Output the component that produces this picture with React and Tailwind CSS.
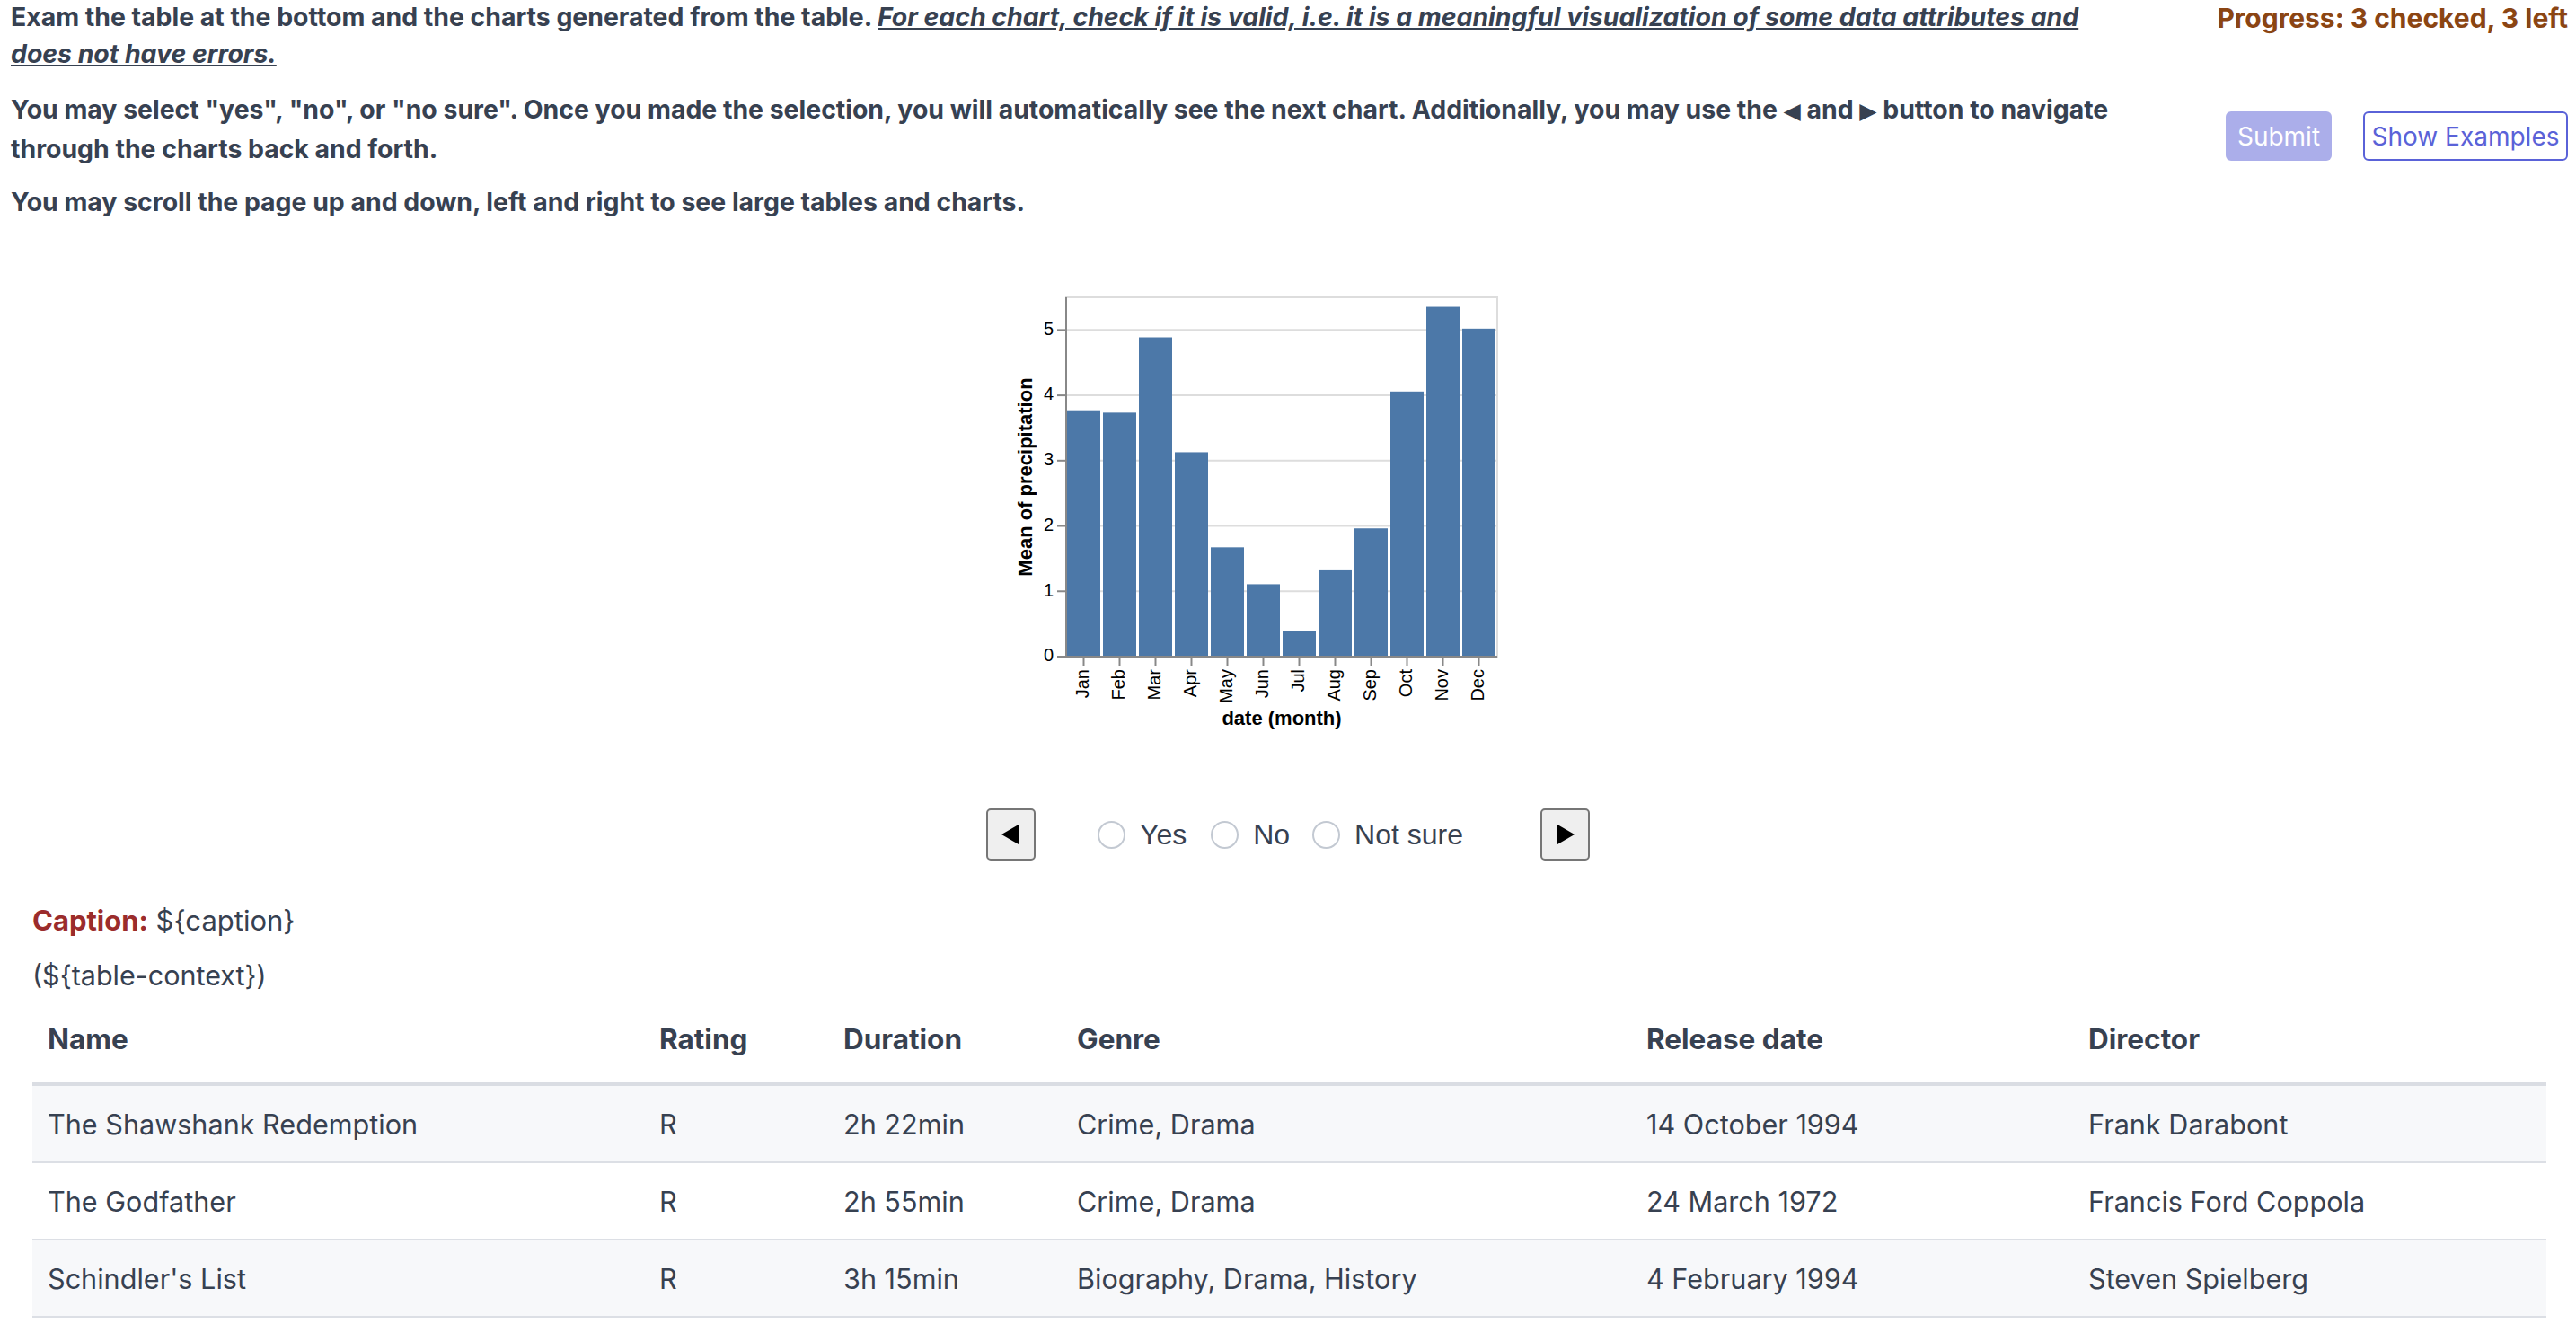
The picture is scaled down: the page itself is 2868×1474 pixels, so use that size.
import React from "react";

const data = [
  ["Jan", 3.758],
  ["Feb", 3.735],
  ["Mar", 4.888],
  ["Apr", 3.129],
  ["May", 1.673],
  ["Jun", 1.108],
  ["Jul", 0.388],
  ["Aug", 1.321],
  ["Sep", 1.963],
  ["Oct", 4.059],
  ["Nov", 5.355],
  ["Dec", 5.021],
];

function Chart() {
  const x0 = 67;
  const y0 = 31;
  const W = 480;
  const H = 400;
  const k = H / 5.5;
  const zero = y0 + H;
  return (
    <svg width="628" height="520" viewBox="0 0 628 520">
      <g fontFamily="'Liberation Sans', Arial, Helvetica, sans-serif">
        <rect x={x0} y={y0} width={W} height={H} fill="none" stroke="#dddddd" strokeWidth="2" />
        {[0, 1, 2, 3, 4, 5].map((v) => (
          <line key={v} x1={x0} x2={x0 + W} y1={zero - v * k} y2={zero - v * k} stroke="#dddddd" strokeWidth="2" />
        ))}
        {data.map(([m, v], i) => (
          <rect key={m} x={x0 + 1 + i * 40} y={zero - v * k} width="37" height={v * k} fill="#4c78a8" />
        ))}
        <line x1={x0} x2={x0} y1={y0} y2={zero + 1} stroke="#888888" strokeWidth="2" />
        {[0, 1, 2, 3, 4, 5].map((v) => (
          <g key={v}>
            <line x1={x0 - 10} x2={x0} y1={zero - v * k} y2={zero - v * k} stroke="#888888" strokeWidth="2" />
            <text x={x0 - 14} y={zero - v * k} textAnchor="end" dominantBaseline="middle" fontSize="20" fill="#000">
              {v}
            </text>
          </g>
        ))}
        <text
          transform={`translate(23, ${y0 + H / 2}) rotate(-90)`}
          textAnchor="middle"
          dominantBaseline="middle"
          fontSize="22"
          fontWeight="bold"
          fill="#000"
        >
          Mean of precipitation
        </text>
        <line x1={x0 - 1} x2={x0 + W} y1={zero} y2={zero} stroke="#888888" strokeWidth="2" />
        {data.map(([m], i) => {
          const cx = x0 + 1 + i * 40 + 18.5;
          return (
            <g key={m}>
              <line x1={cx} x2={cx} y1={zero} y2={zero + 10} stroke="#888888" strokeWidth="2" />
              <text
                transform={`translate(${cx}, ${zero + 14}) rotate(-90)`}
                textAnchor="end"
                dominantBaseline="middle"
                fontSize="20"
                fill="#000"
              >
                {m}
              </text>
            </g>
          );
        })}
        <text x={x0 + W / 2} y="501" textAnchor="middle" dominantBaseline="middle" fontSize="22" fontWeight="bold" fill="#000">
          date (month)
        </text>
      </g>
    </svg>
  );
}

function Radio({ label }) {
  return (
    <label className="flex items-center">
      <span className="block h-[31px] w-[31px] rounded-full border-2 border-[#c3c9d2] bg-white" />
      <span className="ml-[16px] text-[32px] leading-[40px] text-[#374151] [font-family:'Liberation_Sans',Arial,sans-serif]">
        {label}
      </span>
    </label>
  );
}

const rows = [
  ["The Shawshank Redemption", "R", "2h 22min", "Crime, Drama", "14 October 1994", "Frank Darabont"],
  ["The Godfather", "R", "2h 55min", "Crime, Drama", "24 March 1972", "Francis Ford Coppola"],
  ["Schindler's List", "R", "3h 15min", "Biography, Drama, History", "4 February 1994", "Steven Spielberg"],
];

const cols = ["Name", "Rating", "Duration", "Genre", "Release date", "Director"];
const widths = ["w-[681px]", "w-[205px]", "w-[260px]", "w-[634px]", "w-[492px]", "w-[527px]"];

export default function App() {
  return (
    <div className="min-h-[1474px] w-[2868px] overflow-hidden bg-white text-[#374151] [font-family:Inter,'Noto_Sans',sans-serif]">
      {/* header */}
      <div className="flex">
        <div className="w-[2368px] shrink-0 pl-[12px] text-[28.4px] font-bold">
          <p className="mt-[-2px] leading-[41px]">
            Exam the table at the bottom and the charts generated from the table.{" "}
            <span className="italic underline">
              For each chart, check if it is valid, i.e. it is a meaningful visualization of some data attributes and does not have errors.
            </span>
          </p>
          <p className="mt-[20px] leading-[44px]">
            You may select "yes", "no", or "no sure". Once you made the selection, you will automatically see the next chart. Additionally, you may use the{" "}
            <span className="[font-family:'DejaVu_Sans',sans-serif] text-[25px] leading-[20px]">◀</span> and{" "}
            <span className="[font-family:'DejaVu_Sans',sans-serif] text-[25px] leading-[20px]">▶</span> button to navigate through the charts back and forth.
          </p>
          <p className="mt-[15px] leading-[44px]">You may scroll the page up and down, left and right to see large tables and charts.</p>
        </div>
        <div className="flex flex-1 flex-col items-end pr-[9px]">
          <div className="text-[30px] font-bold leading-[40px] text-[#8b4513]">Progress: 3 checked, 3 left</div>
          <div className="mt-[84px] flex gap-[35px]">
            <button className="h-[55px] w-[118px] rounded-[6px] bg-[#abaeea] text-[28px] text-white">Submit</button>
            <button className="h-[55px] w-[228px] rounded-[6px] border-2 border-[#5a62d8] bg-white text-[28px] text-[#5a62d8]">
              Show Examples
            </button>
          </div>
        </div>
      </div>

      {/* chart */}
      <div className="mt-[53px] flex justify-center">
        <Chart />
      </div>

      {/* nav */}
      <div className="mt-[80px] flex items-center justify-center">
        <button className="flex h-[58px] w-[55px] items-center justify-center rounded-[5px] border-2 border-[#767676] bg-[#efefef]">
          <svg width="20" height="22" viewBox="0 0 20 22">
            <polygon points="19,0 19,22 0,11" fill="#000" />
          </svg>
        </button>
        <div className="ml-[69px] flex items-center">
          <Radio label="Yes" />
          <div className="ml-[27px]">
            <Radio label="No" />
          </div>
          <div className="ml-[25px]">
            <Radio label="Not sure" />
          </div>
        </div>
        <button className="ml-[86px] flex h-[58px] w-[55px] items-center justify-center rounded-[5px] border-2 border-[#767676] bg-[#efefef]">
          <svg width="20" height="22" viewBox="0 0 20 22">
            <polygon points="1,0 1,22 20,11" fill="#000" />
          </svg>
        </button>
      </div>

      {/* caption + table */}
      <div className="pl-[36px] pr-[33px]">
        <p className="mt-[47px] text-[31px] leading-[40px]">
          <span className="font-bold text-[#9b2c2c]">Caption:</span> {"${caption}"}
        </p>
        <p className="mt-[21px] text-[30.5px] leading-[40px]">{"(${table-context})"}</p>
        <table className="mt-[17px] w-full table-fixed border-separate border-spacing-0">
          <thead>
            <tr>
              {cols.map((c, i) => (
                <th
                  key={c}
                  className={`${widths[i]} border-b-4 border-[#dadde3] pb-[28px] pl-[17px] pt-[14px] text-left text-[31.5px] font-bold leading-[40px]`}
                >
                  {c}
                </th>
              ))}
            </tr>
          </thead>
          <tbody>
            {rows.map((r, ri) => (
              <tr key={ri} className={ri % 2 === 0 ? "bg-[#f7f8fa]" : "bg-white"}>
                {r.map((cell, ci) => (
                  <td key={ci} className="border-b-2 border-[#dcdfe5] pb-[21px] pl-[17px] pt-[23px] text-[30.6px] leading-[40px]">
                    {cell}
                  </td>
                ))}
              </tr>
            ))}
          </tbody>
        </table>
      </div>
    </div>
  );
}
